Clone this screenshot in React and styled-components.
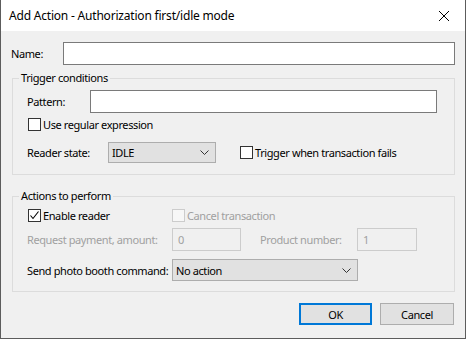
import React from "react";
import styled, { createGlobalStyle } from "styled-components";

const Global = createGlobalStyle`
  body {
    margin: 0;
    font-family: "Noto Sans", "Liberation Sans", sans-serif;
    font-size: 11px;
    letter-spacing: -0.4px;
    color: #000;
    background: #f0f0f0;
  }
`;

const Window = styled.div`
  width: 466px;
  height: 339px;
  box-sizing: border-box;
  border: 1px solid #5c5c5c;
  border-top: none;
  background: #f0f0f0;
  display: flex;
  flex-direction: column;
`;

const TitleBar = styled.div`
  height: 31px;
  flex: none;
  background: #fff;
  display: flex;
  align-items: center;
  justify-content: space-between;
  padding: 0 16px 0 8px;
`;

const Title = styled.span`
  font-size: 12px;
  letter-spacing: -0.2px;
`;

const Body = styled.div`
  padding: 11px 10px 0 10px;
  display: flex;
  flex-direction: column;
`;

const Row = styled.div`
  display: flex;
  align-items: center;
  margin-top: ${(p) => p.$mt || 0}px;
`;

const Label = styled.span`
  width: ${(p) => p.$w}px;
  margin-left: ${(p) => p.$ml || 0}px;
  flex: none;
  white-space: nowrap;
  color: ${(p) => (p.$disabled ? "#a0a0a0" : "#000")};
`;

const Input = styled.div`
  box-sizing: border-box;
  width: ${(p) => p.$w}px;
  height: 23px;
  border: 1px solid ${(p) => (p.$disabled ? "#cccccc" : "#7a7a7a")};
  background: ${(p) => (p.$disabled ? "#f0f0f0" : "#fff")};
  color: ${(p) => (p.$disabled ? "#a0a0a0" : "#000")};
  padding: 0 5px;
  display: flex;
  align-items: center;
  flex: none;
`;

const Select = styled.div`
  box-sizing: border-box;
  width: ${(p) => p.$w}px;
  height: ${(p) => p.$h || 21}px;
  border: 1px solid #adadad;
  background: #e1e1e1;
  padding: 0 6px 0 3px;
  display: flex;
  align-items: center;
  justify-content: space-between;
  flex: none;
`;

const Group = styled.fieldset`
  margin: ${(p) => p.$mt}px 0 0 1px;
  padding: 0;
  border: 1px solid #dcdcdc;
  min-width: 0;
`;

const Legend = styled.legend`
  margin-left: 6px;
  padding: 0 2px;
  line-height: 16px;
`;

const GroupBody = styled.div`
  padding: ${(p) => p.$pt}px 0 ${(p) => p.$pb}px 14px;
`;

const CheckLabel = styled.label`
  display: flex;
  align-items: center;
  gap: 2px;
  height: 17px;
  margin-left: ${(p) => p.$ml || 0}px;
  color: ${(p) => (p.$disabled ? "#a0a0a0" : "#000")};
  white-space: nowrap;
`;

const Box = styled.span`
  box-sizing: border-box;
  width: 13px;
  height: 13px;
  flex: none;
  border: 1px solid ${(p) => (p.$disabled ? "#cccccc" : "#333")};
  background: ${(p) => (p.$disabled ? "#f7f7f7" : "#fff")};
  display: flex;
  align-items: center;
  justify-content: center;
`;

const Buttons = styled.div`
  display: flex;
  justify-content: flex-end;
  gap: 8px;
  margin-top: 11px;
  margin-right: 1px;
`;

const Button = styled.button`
  box-sizing: border-box;
  width: ${(p) => p.$w}px;
  height: 22px;
  font: inherit;
  letter-spacing: inherit;
  color: #000;
  background: #e1e1e1;
  border: ${(p) => (p.$default ? "2px solid #0078d7" : "1px solid #adadad")};
  padding: 0;
`;

const Chevron = () => (
  <svg width="9" height="5" viewBox="0 0 9 5">
    <path d="M0.5 0.5 L4.5 4.5 L8.5 0.5" fill="none" stroke="#333" strokeWidth="1" />
  </svg>
);

const CloseIcon = () => (
  <svg width="10" height="10" viewBox="0 0 10 10">
    <path d="M0 0 L10 10 M10 0 L0 10" stroke="#000" strokeWidth="1" />
  </svg>
);

const Check = ({ checked, disabled, children, ml }) => (
  <CheckLabel $disabled={disabled} $ml={ml}>
    <Box $disabled={disabled}>
      {checked && (
        <svg width="11" height="11" viewBox="0 0 11 11">
          <path d="M1.5 5.5 L4 8.5 L9.5 1.5" fill="none" stroke="#000" strokeWidth="1.1" />
        </svg>
      )}
    </Box>
    {children}
  </CheckLabel>
);

export default function App() {
  return (
    <Window>
      <Global />
      <TitleBar>
        <Title>Add Action - Authorization first/idle mode</Title>
        <CloseIcon />
      </TitleBar>
      <Body>
        <Row>
          <Label $w={52}>Name:</Label>
          <Input $w={392} />
        </Row>

        <Group $mt={5}>
          <Legend>Trigger conditions</Legend>
          <GroupBody $pt={4} $pb={11}>
            <Row>
              <Label $w={63}>Pattern:</Label>
              <Input $w={347} />
            </Row>
            <Row $mt={3}>
              <Check ml={1}>Use regular expression</Check>
            </Row>
            <Row $mt={9}>
              <Label $w={81}>Reader state:</Label>
              <Select $w={108}>
                <span>IDLE</span>
                <Chevron />
              </Select>
              <Check ml={24}>Trigger when transaction fails</Check>
            </Row>
          </GroupBody>
        </Group>

        <Group $mt={13}>
          <Legend>Actions to perform</Legend>
          <GroupBody $pt={3} $pb={10}>
            <Row>
              <Label $w={145}>
                <Check ml={1} checked>
                  Enable reader
                </Check>
              </Label>
              <Check disabled>Cancel transaction</Check>
            </Row>
            <Row $mt={4}>
              <Label $w={145} $disabled>
                Request payment, amount:
              </Label>
              <Input $w={69} $disabled>
                0
              </Input>
              <Label $w={97} $ml={19} $disabled>
                Product number:
              </Label>
              <Input $w={60} $disabled>
                1
              </Input>
            </Row>
            <Row $mt={8}>
              <Label $w={145}>Send photo booth command:</Label>
              <Select $w={186} $h={22}>
                <span>No action</span>
                <Chevron />
              </Select>
            </Row>
          </GroupBody>
        </Group>

        <Buttons>
          <Button $w={73} $default>
            OK
          </Button>
          <Button $w={74}>Cancel</Button>
        </Buttons>
      </Body>
    </Window>
  );
}
